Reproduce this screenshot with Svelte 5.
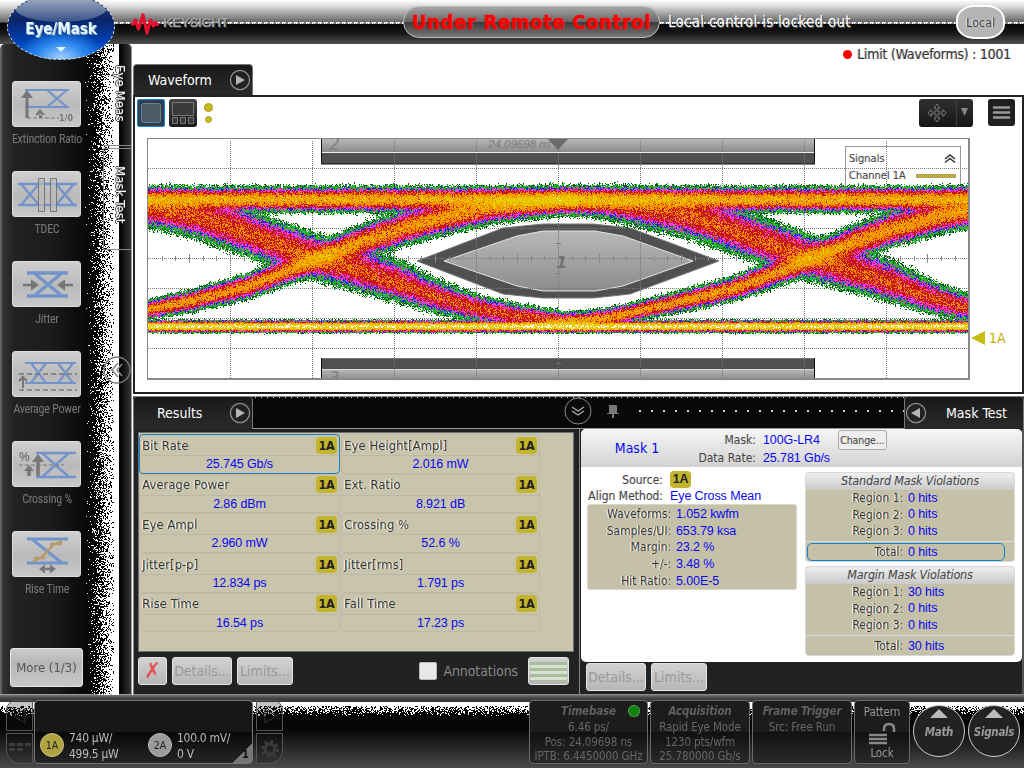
<script>
  const tools = ['Extinction Ratio', 'TDEC', 'Jitter', 'Average Power', 'Crossing %', 'Rise Time'];
  const results = [
    ['Bit Rate', '25.745 Gb/s'], ['Eye Height[Ampl]', '2.016 mW'],
    ['Average Power', '2.86 dBm'], ['Ext. Ratio', '8.921 dB'],
    ['Eye Ampl', '2.960 mW'], ['Crossing %', '52.6 %'],
    ['Jitter[p-p]', '12.834 ps'], ['Jitter[rms]', '1.791 ps'],
    ['Rise Time', '16.54 ps'], ['Fall Time', '17.23 ps']
  ];
  const stats = [
    ['Waveforms:', '1.052 kwfm'], ['Samples/UI:', '653.79 ksa'], ['Margin:', '23.2 %'],
    ['+/-:', '3.48 %'], ['Hit Ratio:', '5.00E-5']
  ];
  const violations = [
    { title: 'Standard Mask Violations', rows: ['0 hits', '0 hits', '0 hits'], total: '0 hits', selected: true },
    { title: 'Margin Mask Violations', rows: ['30 hits', '0 hits', '0 hits'], total: '30 hits', selected: false }
  ];
  const gridX = [1, 2, 3, 4, 5, 6, 7, 8, 9].map((i) => i * 82 + 0.5);
  const gridY = [29.5, 89.5, 149.5, 179.5, 209.5];
  const ticks = Array.from({ length: 59 }, (_, i) => ({ x: Math.round((i + 1) * 13.67) + 0.5, big: (i + 1) % 6 === 3 }));

  function random(seed) {
    return () => {
      seed = (seed + 0x6d2b79f5) | 0;
      let t = Math.imul(seed ^ (seed >>> 15), 1 | seed);
      t = (t + Math.imul(t ^ (t >>> 7), 61 | t)) ^ t;
      return ((t ^ (t >>> 14)) >>> 0) / 4294967296;
    };
  }

  // Dithers a canvas with white pixels; fn gives the chance of one at each point.
  function speckle(node, fn) {
    const ctx = node.getContext('2d');
    const img = ctx.createImageData(node.width, node.height);
    const rnd = random(7);
    for (let y = 0; y < node.height; y++)
      for (let x = 0; x < node.width; x++)
        if (rnd() < fn(x, y)) img.data.fill(255, (y * node.width + x) * 4, (y * node.width + x) * 4 + 4);
    ctx.putImageData(img, 0, 0);
  }
  const sideNoise = (x) => (x > 34 ? 0 : x > 29 ? 1 : x > 19 ? 0.5 + (x - 19) * 0.04 : Math.pow(x / 19, 2) * 0.5);
  const footNoise = (x, y) => (y < 4 ? 1 : Math.max(0, 0.7 - (y - 4) * 0.07));

  const interp = (pts, t) => {
    if (t <= pts[0][0]) return pts[0][1];
    for (let i = 1; i < pts.length; i++)
      if (t <= pts[i][0]) {
        const [a, b] = pts[i - 1], [c, d] = pts[i];
        return b + ((d - b) * (t - a)) / (c - a);
      }
    return pts[pts.length - 1][1];
  };
  const fall = [[-250, 201], [-200, 203], [-166, 208], [-120, 217], [-72, 233], [0, 259], [40, 270], [82, 283], [125, 298], [157, 307], [200, 315], [250, 321]];
  const rise = [[-250, 322], [-200, 317], [-166, 309], [-120, 299], [-72, 287], [0, 259], [40, 243], [88, 227], [130, 216], [180, 206], [250, 200]];
  const fallW = [[-250, 4.5], [-166, 7], [-100, 7.8], [40, 7.4], [120, 6], [170, 4.8], [250, 3.5]];
  const riseW = [[-250, 3.2], [-170, 3.3], [-72, 4.3], [0, 5.4], [60, 6.1], [130, 6], [250, 5]];
  const tail = [[-160, -4], [-120, -2.3], [50, -2.3], [90, -3], [140, -7]];

  function eye(node) {
    const W = node.width, H = node.height;
    const ctx = node.getContext('2d');
    const img = ctx.createImageData(W, H);
    const rnd = random(42);
    const levels = [
      [1.2, [255, 255, 245]], [0.05, [232, 204, 0]], [-0.9, [242, 142, 0]], [-1.85, [198, 20, 16]],
      [-2.6, [255, 60, 245]], [-3.1, [24, 24, 255]], [-4.7, [40, 180, 40]], [-5.4, [0, 88, 16]]
    ];
    for (let x = 0; x < W; x++) {
      const bands = [[199, 4.3, 0], [326, 1.9, 1.2]];
      for (const c of [-324, 168, 661, 1153]) {
        const t = x - c;
        if (Math.abs(t) > 262) continue;
        const fade = Math.abs(t) > 240 ? -(Math.abs(t) - 240) * 0.05 : 0;
        bands.push([interp(fall, t), interp(fallW, t), -0.95 + fade]);
        if (t > -160 && t < 140) bands.push([interp(fall, t) - 11, 6, interp(tail, t)]);
        bands.push([interp(rise, t), interp(riseW, t), -0.3 + fade]);
      }
      const jitter = bands.map((b) => (rnd() - 0.5) * (b[1] < 2 ? 0.8 : 2));
      for (let y = 40; y < 200; y++) {
        let d = 0;
        bands.forEach(([yc, s, w], i) => {
          const z = (y + 138 - yc - jitter[i]) / s;
          d += Math.exp(w - (z * z) / 2);
        });
        const n = rnd() + rnd() + rnd() - 1.5;
        const base = Math.log(d + 1e-9);
        const v = base + n * (base < -3 ? 1.5 : base < -2 ? 1.1 : base > 0.2 ? 0.6 : 0.85);
        const hit = levels.find((l) => v > l[0]);
        if (hit) img.data.set([...hit[1], 255], (y * W + x) * 4);
      }
    }
    ctx.putImageData(img, 0, 0);
  }
</script>

{#snippet play(left)}
  <svg class="play" width="22" height="22" viewBox="0 0 22 22">
    <circle cx="11" cy="11" r="9.6" fill="#222" stroke="#8c8c8c" stroke-width="1.3" />
    <path d={left ? 'M15 6v10L6 11z' : 'M7 6v10l9-5z'} fill="#b4b4b4" />
  </svg>
{/snippet}

<div class="app">
  <header>
    <div class="rule"></div>
    <svg class="logo" width="30" height="26" viewBox="0 0 30 26"><path d="M1 14h2.500l2-4 3 9 4.500-14 4 18 3.500-13 3 6 2-3.500 1.500 2h2" fill="none" stroke="#e4102c" stroke-width="3.200" stroke-linejoin="round" /></svg>
    <b class="brand">KEYSIGHT</b>
    <div class="remote">Under Remote Control</div>
    <span class="locked">Local control is locked out</span>
    <button class="local">Local</button>
    <div class="orb"><i></i><b>Eye/Mask</b><em></em></div>
  </header>

  <main>
    <aside>
      <canvas class="noise" width="36" height="651" use:speckle={sideNoise}></canvas>
      <nav>
        {#each tools as tool, i}
          <div class="tool">
            <button>
              <svg width="69" height="46" viewBox="0 0 69 46" fill="none">
                {#if i === 0}
                  <path d="M12 8h44M12 25h44M34 8l20 17M54 8L34 25" stroke="#7294cb" stroke-width="2.2" />
                  <path d="M14 36V13" stroke="#777" stroke-width="3" /><path d="M14 8l-6 8h12zM27 27l-5 6h10zM26 32h3v4h-3z" fill="#777" />
                  <path d="M14 36h32" stroke="#777" stroke-dasharray="4 2" /><text x="46" y="39" class="tiny">1/0</text>
                {:else if i === 1}
                  <path d="M5 12h59M5 33h59M8 12l18 21M8 33l18-21M43 12l18 21M43 33l18-21" stroke="#7294cb" stroke-width="2.4" />
                  <path d="M25.500 6.500h6v33h-6zM37.500 6.500h6v33h-6z" fill="#bbb" fill-opacity=".7" stroke="#777" />
                {:else if i === 2}
                  <path d="M14 11h41M14 34h41M21 11l28 23M21 34l28-23" stroke="#7294cb" stroke-width="3.4" />
                  <path d="M10 23h10M50 23h10" stroke="#777" stroke-width="2.4" /><path d="M26 23l-8-5.500v11zM44 23l8-5.500v11z" fill="#777" />
                {:else if i === 3}
                  <path d="M12 11h51M12 31h51M18 11l15 20M18 31l15-20M45 11l15 20M45 31l15-20" stroke="#7294cb" stroke-width="2.2" />
                  <path d="M6 22h58M6 38h58" stroke="#777" stroke-dasharray="5 3" stroke-width="1.4" /><path d="M10 36V26M6 29l4-4 4 4" stroke="#777" stroke-width="2" />
                {:else if i === 4}
                  <path d="M23 11h40M23 35h40M29 11l27 24M29 35l27-24" stroke="#7294cb" stroke-width="2.4" />
                  <path d="M6 23h45" stroke="#777" stroke-dasharray="4 2" /><path d="M25 34V18M16 34v-5" stroke="#777" stroke-width="3.5" /><path d="M25 12l-6 8h12zM16 23l-5 6h10z" fill="#777" />
                  <text x="6" y="19" class="pct">%</text>
                {:else}
                  <path d="M14 7h41M14 31h41M20 8l29 23" stroke="#7294cb" stroke-width="3" />
                  <path d="M20 29l8-3 12-13 9-4M21 26h11M37 12h12" stroke="#b79c6b" stroke-width="2.6" />
                  <path d="M30 37h9" stroke="#777" stroke-width="2.600" /><path d="M26 37l6-4.500v9zM43 37l-6-4.500v9z" fill="#777" />
                {/if}
              </svg>
            </button>
            <span>{tool}</span>
          </div>
        {/each}
        <button class="more">More (1/3)</button>
      </nav>
      <div class="vtabs"><span class="on">Eye Meas</span><span>Mask Test</span></div>
      <svg class="collapse" width="28" height="28" viewBox="0 0 28 28" fill="none"><circle cx="14" cy="14" r="13" stroke="#777" stroke-width="1.3" /><path d="M15 7l-6 7 6 7M19 8l-5 6 5 6" stroke="#888" stroke-width="1.6" /></svg>
    </aside>

    <section class="content">
      <div class="topstrip">
        <div class="tab">Waveform {@render play(false)}</div>
        <div class="limit"><i></i>Limit (Waveforms) : 1001</div>
      </div>

      <div class="wave">
        <div class="bar">
          <svg class="lay sel" width="28" height="28" viewBox="0 0 28 28"><rect x="4.500" y="4.500" width="19" height="19" rx="2" fill="#4b5a66" stroke="#71808c" /></svg>
          <svg class="lay" width="28" height="28" viewBox="0 0 28 28" fill="#3a3a3a" stroke="#777"><path d="M3.500 3.500h21v13h-21zM3.500 18.500h5v6h-5zM11.500 18.500h5v6h-5zM19.500 18.500h5v6h-5z" /></svg>
          <div class="dots"><i></i><i></i></div>
          <svg class="move" width="54" height="28" viewBox="0 0 54 28"><path d="M18 5l3 4h-2v4h5v-2.500l3 3.500-3 3.500V15h-5v4h2l-3 4-3-4h2v-4h-5v2.500L9 14l3-3.500V13h5V9h-2z" fill="none" stroke="#777" /><path d="M37.500 1v26" stroke="#3c3c3c" /><path d="M42 9h7l-3.500 8z" fill="#888" /></svg>
          <svg class="menu" width="27" height="27" viewBox="0 0 27 27"><path d="M6 8.500h15M6 13.500h15M6 18.500h15" stroke="#999" stroke-width="2.600" stroke-linecap="round" /></svg>
        </div>
        <div class="row">
          <div class="plot">
            <svg width="822" height="241" viewBox="0 0 822 241">
              <defs>
                <linearGradient id="g" x2="0" y2="1"><stop stop-color="#b8b8b8" /><stop offset="1" stop-color="#8c8c8c" /></linearGradient>
              </defs>
              <rect x="173.500" y="-2" width="493" height="27" fill="#505050" stroke="#111" />
              <rect x="174" y="0" width="492" height="13" fill="url(#g)" /><path d="M174 13.500h492" stroke="#eee" />
              <rect x="173.500" y="219.500" width="493" height="21" fill="#505050" stroke="#777" />
              <rect x="174" y="230" width="492" height="11" fill="url(#g)" /><path d="M174 230.500h492" stroke="#ddd" /><path d="M173.500 219v21M666.500 219v21" stroke="#111" />
              <text x="181" y="11" class="region">2</text><text x="181" y="245" class="region">3</text>
              <path d="M269 122L355 89 395 85h50l37 4 89 33-89 33-37 4h-50l-40-4z" fill="#505050" stroke="#777" />
              <path d="M296 122L369 97l26-5h52l28 5 70 25-70 25-28 5h-52l-26-5z" fill="url(#g)" stroke="#e4e4e4" />
              <text x="408" y="129" class="region one">1</text>
              <g stroke="#777" stroke-dasharray="1 1">
                {#each gridX as x}<path d="M{x} 2V240" />{/each}
                {#each gridY as y}<path d="M0 {y}H821" />{/each}
                <path d="M0 119.500H821" />
              </g>
              {#each ticks as t}<path d="M{t.x} {t.big ? 115 : 117}v{t.big ? 9 : 5}" stroke="#888" />{/each}
              <path d="M408 104.500h5M408 134.500h5M408 224.500h5" stroke="#777" />
              <text x="340" y="9" class="time">24.09698 ns</text>
              <path d="M400 0h20l-10 11z" fill="#6b6b6b" />
            </svg>
            <div class="legend">
              <div><span class="etch pale">Signals</span> <svg width="12" height="9" viewBox="0 0 12 9" fill="none" stroke="#333" stroke-width="1.500"><path d="M1 5l5-4 5 4M1 8.500l5-4 5 4" /></svg></div>
              <div><span class="etch pale">Channel 1A</span> <i></i></div>
            </div>
            <canvas width="821" height="240" use:eye></canvas>
          </div>
          <div class="marker"><i></i>1A</div>
        </div>
      </div>

      <div class="lowhead">
        <div class="tab res">Results {@render play(false)}</div>
        <div class="gap">
          <svg class="chev" width="28" height="28" viewBox="0 0 28 28" fill="none"><circle cx="14" cy="14" r="13" stroke="#8b8b8b" fill="#0b0b0b" /><path d="M8 10l6 4 6-4M8 14l6 4 6-4" stroke="#aaa" stroke-width="1.300" /></svg>
          <svg width="12" height="14" viewBox="0 0 12 14"><path d="M2 1h8v8h2v1H7v4H5v-4H0V9h2z" fill="#777" /></svg>
          <div class="pins"></div>
        </div>
        <div class="tab masktab">{@render play(true)} Mask Test</div>
      </div>

      <div class="panels">
        <section class="results">
          <div class="list">
            {#each results as [name, value], i}
              <div class="cell" class:chosen={i === 0}>
                <div class="title"><span class="etch">{name}</span><b class="badge">1A</b></div>
                <div class="value">{value}</div>
              </div>
            {/each}
          </div>
          <div class="actions">
            <button class="x">✗</button><button class="w60">Details...</button><button class="w55">Limits...</button>
            <label><i></i>Annotations</label>
            <button class="lines"><i></i></button>
          </div>
        </section>

        <section class="mask">
          <div class="card">
            <div class="cardhead">
              <h2>Mask 1</h2>
              <dl><dt><span class="etch pale">Mask:</span></dt><dd>100G-LR4 <button class="change"><span class="etch pale">Change...</span></button></dd><dt><span class="etch pale">Data Rate:</span></dt><dd>25.781 Gb/s</dd></dl>
            </div>
            <div class="cardbody">
              <div class="leftcol">
                <dl class="source"><dt><span class="etch pale">Source:</span></dt><dd><b class="badge">1A</b></dd><dt><span class="etch pale">Align Method:</span></dt><dd>Eye Cross Mean</dd></dl>
                <dl class="stats">{#each stats as [k, v]}<dt><span class="etch">{k}</span></dt><dd>{v}</dd>{/each}</dl>
              </div>
              <div class="rightcol">
                {#each violations as box}
                  <div class="viol">
                    <h3><span class="etch pale">{box.title}</span></h3>
                    <dl>{#each box.rows as hits, i}<dt><span class="etch">Region {i + 1}:</span></dt><dd>{hits}</dd>{/each}</dl>
                    <dl class="total" class:picked={box.selected}><dt><span class="etch">Total:</span></dt><dd>{box.total}</dd></dl>
                  </div>
                {/each}
              </div>
            </div>
          </div>
          <div class="actions"><button class="w60">Details...</button><button class="w55">Limits...</button></div>
        </section>
      </div>
    </section>
  </main>

  <footer>
    <canvas class="footnoise" width="1024" height="17" use:speckle={footNoise}></canvas>
    <div class="pair left">
      <div><svg width="14" height="16" viewBox="0 0 14 16"><path d="M12 1v14L1 8z" fill="none" stroke="#333" /></svg></div>
      <div><svg width="22" height="12" viewBox="0 0 22 12" fill="#3c3c3c"><path d="M0 0h6v3H0zM8 0h6v3H8zM16 0h6v3h-6zM0 5h6v3H0zM8 5h6v3H8z" /></svg></div>
    </div>
    <div class="channels">
      <i class="ball">1A</i><p class="c1">740 µW/<br />499.5 µW</p>
      <i class="ball grey">2A</i><p>100.0 mV/<br />0 V</p>
      <b class="corner"><span>1</span></b>
    </div>
    <div class="pair right">
      <div><svg width="14" height="16" viewBox="0 0 14 16"><path d="M2 1v14l11-7z" fill="none" stroke="#333" /></svg></div>
      <div><svg width="20" height="20" viewBox="0 0 20 20" fill="none" stroke="#3c3c3c"><circle cx="10" cy="10" r="5" stroke-width="3" /><circle cx="10" cy="10" r="7.500" stroke-width="3" stroke-dasharray="3 2.890" /></svg></div>
    </div>
    <div class="status time1"><h4>Timebase <i></i></h4><p>6.46 ps/</p><p>Pos: 24.09698 ns</p><p>IPTB: 6.4450000 GHz</p></div>
    <div class="status s99"><h4>Acquisition</h4><p>Rapid Eye Mode</p><p>1230 pts/wfm</p><p>25.780000 Gb/s</p></div>
    <div class="status s99"><h4>Frame Trigger</h4><p>Src: Free Run</p></div>
    <div class="status lock">
      <p>Pattern</p>
      <svg width="28" height="23" viewBox="0 0 28 23"><path d="M16 9V7q0-5 5-5t5 5v3" fill="none" stroke="#888" stroke-width="2.500" /><path d="M1 13h18M1 17h18M1 21h18" stroke="#888" stroke-width="2.600" /></svg>
      <p>Lock</p>
    </div>
    <div class="round"><i></i>Math</div>
    <div class="round"><i></i>Signals</div>
  </footer>
</div>

<style>
  :global(body) { margin: 0; background: #fff; overflow: hidden; }
  .app { width: 1024px; height: 768px; display: flex; flex-direction: column; overflow: hidden; font-family: 'DejaVu Sans Condensed', 'DejaVu Sans', sans-serif; font-size: 12px; font-stretch: condensed; background: #fff; position: relative; }
  .app * { box-sizing: border-box; }
  button { font: inherit; padding: 0; margin: 0; border: 1px solid #e4e4e4; border-radius: 3px; }
  h2, h3, h4, p, dl, dd { margin: 0; font-weight: normal; }
  svg { display: block; flex: none; }

  header { height: 44px; flex: none; display: flex; align-items: center; position: relative; z-index: 2; padding-left: 130px; background: linear-gradient(#fff 0, #e4e4e4 5px, #999 15px, #686868 22px, #060606 23px, #161616 33px, #3a3a3a 40px, #505050 44px); }
  .rule { position: absolute; left: 108px; right: 0; top: 22px; height: 2px; background: repeating-linear-gradient(90deg, #fff 0 4px, #777 4px 6px); border-bottom: 1px dotted #888; }
  .logo { margin-top: 1px; position: relative; }
  .brand { font: bold 13.500px 'Liberation Sans', sans-serif; letter-spacing: -.45px; color: #a0a0a0; margin-left: 3px; width: 70px; position: relative; text-shadow: 1px 1px #333; }
  .remote { position: relative; width: 257px; height: 32px; margin-left: 170px; border: 1px solid #bbb; border-radius: 16px; background: linear-gradient(#a6a6a6, #666 49%, #3b3b3b 50%, #777); color: #f00; font-weight: bold; font-size: 20px; line-height: 30px; text-align: center; white-space: nowrap; letter-spacing: .65px; -webkit-text-stroke: .5px #f00; }
  .locked { position: relative; width: 184px; margin-left: 8px; font-size: 15px; color: #fff; white-space: nowrap; letter-spacing: .28px; text-shadow: 1px 1px #555; }
  .local { position: relative; margin-left: 104px; width: 49px; height: 34px; border: 2px solid #fff; border-radius: 18px / 15px; background: #b5b5b5; color: #444; font-size: 12.500px; text-shadow: -1px 0 #eee; }
  .orb { position: absolute; left: 7px; top: -7px; width: 108px; height: 67px; border: 1px dashed #ddd; border-radius: 50%; overflow: hidden; background: radial-gradient(ellipse 45px 30px at 50% 100%, #a8d4ff, #2b86ef 55%, transparent), linear-gradient(#304a80, #0a2468 40%, #0043b8 75%, #0068e0); display: flex; align-items: center; justify-content: center; }
  .orb i { position: absolute; left: 7px; right: 7px; top: 0; height: 28px; border-radius: 50%; background: linear-gradient(#c4cede, #40598a); opacity: .85; }
  .orb b { position: relative; font-size: 15px; color: #e8f8fc; top: 2px; text-shadow: 1px 1px #8ac; }
  .orb em { position: absolute; bottom: 7px; border: 5px solid transparent; border-top-color: #d8f4ff; border-bottom: 0; }

  main { height: 651px; flex: none; display: flex; }
  aside { width: 132px; flex: none; position: relative; background: linear-gradient(90deg, #777 0, #333 3px, #222 14px, #1c1c1c 50px, #0c0c0c 80px, #000 104px); display: flex; border-radius: 5px 5px 0 0; border-bottom: 1px solid #999; }
  .noise { position: absolute; left: 84px; top: 0; z-index: 0; }
  nav { width: 94px; padding-top: 37px; display: flex; flex-direction: column; align-items: center; position: relative; }
  .tool { height: 90px; flex: none; text-align: center; width: 94px; }
  .tool button { width: 69px; height: 46px; display: block; margin: 0 auto 0 12px; border: 1px solid #ddd; background: linear-gradient(#cfcfcf, #b9b9b9 55%, #c8c8c8); }
  .tool span { display: block; margin-top: 5px; font: 12px 'Liberation Sans Narrow', 'Roboto', sans-serif; font-stretch: condensed; letter-spacing: -.25px; color: #777; white-space: nowrap; line-height: 15px; }
  .tiny { font: bold 8px 'DejaVu Sans', sans-serif; fill: #777; }
  .pct { font: bold 12px 'Liberation Sans', sans-serif; fill: #777; }
  .more { width: 73px; height: 39px; margin: 27px 0 0 -1px; font-size: 13px; color: #555; background: linear-gradient(#ccc, #b6b6b6 40%, #c8c8c8); }
  .vtabs { position: absolute; left: 119px; top: 0; bottom: 0; width: 13px; border-right: 1px solid #999; background: linear-gradient(90deg, #000, #333); border-radius: 0 5px 0 0; display: flex; flex-direction: column; }
  .vtabs span { writing-mode: vertical-rl; height: 102px; margin-left: -16px; width: 28px; border: solid #888; border-width: 1px 0 1px 1px; color: #fff; text-shadow: 1px 0 #333, -1px 0 #333, 0 1px #555; font-size: 13px; line-height: 22px; padding-top: 17px; letter-spacing: .1px; }
  .vtabs .on { padding-top: 21px; border-left: 0; border-top: 0; margin-bottom: 2px; }
  .collapse { position: absolute; left: 103px; top: 312px; }

  .content { flex: 1; min-width: 0; display: flex; flex-direction: column; padding-left: 1px; }
  .topstrip { height: 51px; flex: none; display: flex; justify-content: space-between; align-items: flex-end; }
  .tab { background: linear-gradient(#191919, #2a2a2a); border: 1px solid #777; border-bottom: 0; border-radius: 4px 4px 0 0; height: 31px; width: 120px; color: #fff; font-size: 14px; display: flex; align-items: center; justify-content: space-between; padding: 0 1px 0 14px; white-space: nowrap; }
  .limit { align-self: flex-start; padding: 2px 13px 0 0; font-size: 14px; letter-spacing: -.25px; color: #333; display: flex; align-items: center; gap: 5px; text-shadow: -1px 0 #ccc; }
  .limit i { width: 9px; height: 9px; border-radius: 50%; background: #f00; }

  .wave { height: 299px; flex: none; border: 2px solid #222; background: #fff; }
  .bar { height: 41px; display: flex; align-items: center; padding: 0 7px 10px 2px; }
  .lay { background: linear-gradient(#444, #1b1b1b); border-radius: 3px; margin-right: 4px; }
  .sel { background: #2b3f50; outline: 1px solid #1585d6; outline-offset: -1px; }
  .dots { display: flex; flex-direction: column; align-items: center; gap: 4px; margin-left: 3px; }
  .dots i { width: 9px; height: 9px; border-radius: 50%; background: #c9ba1e; border: 1px solid #a69b16; }
  .dots i + i { width: 7px; height: 7px; }
  .move { margin-left: auto; background: linear-gradient(#303030, #161616); border-radius: 3px; }
  .menu { background: #202020; border-radius: 3px; margin-left: 15px; }
  .row { display: flex; padding-left: 12px; }
  .plot { position: relative; width: 823px; height: 242px; border: 1px solid #888; border-width: 1px 2px 2px 1px; overflow: hidden; }
  .plot canvas { position: absolute; left: 0; top: -1px; }
  .region { font: italic 17px 'DejaVu Sans', sans-serif; fill: #808080; }
  .one { font-weight: bold; font-size: 16px; fill: #707070; }
  .time { font: italic 11.500px 'Liberation Sans', sans-serif; fill: #7c7c7c; }
  .legend { position: absolute; left: 697px; top: 7px; width: 116px; height: 60px; border: 1px solid #999; padding: 3px 4px 3px 3px; font-size: 11px; }
  .legend div { display: flex; justify-content: space-between; align-items: center; height: 17px; line-height: 17px; white-space: nowrap; }
  .legend i { width: 40px; height: 4px; background: #c6ae22; border: 1px solid #aaa178; }
  .marker { display: flex; align-items: center; align-self: flex-start; margin-top: 190px; padding-left: 1px; gap: 4px; color: #bdb100; font-size: 14px; height: 20px; }
  .marker i { border: 7px solid transparent; border-left: 0; border-right: 14px solid #c8bd12; }

  .lowhead { margin-top: 2px; height: 33px; flex: none; display: flex; background: #222; border-top: 1px solid #888; }
  .res { padding-left: 23px; height: 32px; border-top: 0; }
  .gap { flex: 1; height: 32px; background: repeating-linear-gradient(90deg, #ddd 0 1px, transparent 1px 6px) 2px 0 / 100% 1px no-repeat, #080808; border-bottom: 1px solid #999; display: flex; align-items: center; gap: 15px; padding-left: 311px; padding-bottom: 3px; }
  .pins { flex: 1; height: 20px; background: radial-gradient(circle at 6px 10px, #ddd .7px, transparent .8px) 0 0 / 12px 20px repeat-x; }
  .masktab { padding: 0 16px 0 0; height: 32px; border-top: 0; }

  .panels { height: 266px; flex: none; display: flex; }
  .results { width: 446px; background: #222; border-left: 1px solid #888; border-bottom: 1px solid #888; padding: 3px 0 0 4px; }
  .list { width: 436px; height: 220px; border: 1px solid #6a7078; background: #c9c5ad; display: grid; grid-template: repeat(5, 39.700px) / 202px 200px; padding-top: 1px; }
  .cell { border: 1px solid #c0baa5; border-radius: 4px; margin-right: 1px; }
  .chosen { border: 1px solid #147fca; }
  .title { display: flex; justify-content: space-between; align-items: center; height: 21px; padding: 0 2px; border-bottom: 1px solid #bdb7a4; }
  .title .etch { font-size: 13px; white-space: nowrap; letter-spacing: 0; }
  .etch { color: #34342e; text-shadow: -1px 0 #fff, -.5px -.5px #fff; }
  .pale { color: #444; text-shadow: -1px 0 #ddd; }
  .badge { width: 21px; height: 17px; border-radius: 4px; background: #c4b42d; color: #222; font-size: 12.500px; line-height: 17px; text-align: center; display: block; letter-spacing: -.2px; }
  .value { text-align: center; font: 12.500px/17px 'Liberation Sans', Arial, sans-serif; color: #0808f0; letter-spacing: -.1px; }
  .actions { display: flex; align-items: center; gap: 5px; padding-top: 5px; }
  .actions button { height: 28px; background: linear-gradient(#d2d2d2, #b6b6b6); color: #999; font-size: 14px; }
  .actions .x { width: 29px; color: #e65252; font-size: 22px; line-height: 24px; }
  .w60 { width: 60px; } .w55 { width: 56px; }
  label { display: flex; align-items: center; gap: 6px; margin-left: auto; color: #888; font-size: 14px; letter-spacing: -.1px; }
  label i { width: 18px; height: 18px; background: #e8e8e8; border: 1px solid #bbb; border-radius: 2px; }
  .lines { width: 41px; margin: 0 10px 0 5px; padding: 3px 1px; }
  .lines i { display: block; height: 19px; background: repeating-linear-gradient(#a9bd9c 0 3px, #d8e2d2 3px 6px); }

  .mask { flex: 1; min-width: 0; background: #222; border-left: 1px solid #888; border-right: 2px solid #555; border-bottom: 1px solid #888; padding-left: 1px; }
  .card { height: 233px; border-radius: 5px; background: #fff; overflow: hidden; }
  .cardhead { height: 38px; background: linear-gradient(#f6f6f6, #d2d2d2); display: flex; }
  h2 { width: 112px; text-align: center; line-height: 38px; font-size: 14px; color: #0808f0; }
  dl { display: grid; align-content: start; column-gap: 7px; }
  dt { text-align: right; white-space: nowrap; font-size: 12px; letter-spacing: 0; }
  dd { font: 12.500px/17px 'Liberation Sans', Arial, sans-serif; color: #0808f0; letter-spacing: -.1px; white-space: nowrap; display: flex; align-items: center; }
  .cardhead dl { grid-template: 18px 18px / 63px 140px; padding-top: 2px; align-items: center; }
  .change { width: 49px; height: 20px; margin-left: 18px; border: 1px solid #aaa; background: #eee; font: 10.500px 'DejaVu Sans Condensed', sans-serif; letter-spacing: -.1px; }
  .cardbody { display: flex; padding: 5px 7px 0 6px; justify-content: space-between; }
  .source { grid-template: 17px 16px / 76px auto; height: 33px; align-items: center; margin-top: -1px; }
  .stats { width: 210px; height: 86px; border-radius: 3px; background: #c5c1a9; grid-template: repeat(5, 16.700px) / 83px auto; column-gap: 5px; padding-top: 1px; border: 1px solid #d8d7cb; }
  .stats dt, .viol dt { line-height: 17px; }
  .rightcol { display: flex; flex-direction: column; gap: 4px; }
  .viol { width: 210px; height: 90px; background: #c5c1a9; border-radius: 4px; border: 1px solid #d7d7d7; overflow: hidden; }
  h3 { height: 17px; background: linear-gradient(#eee, #cacaca); text-align: center; font-size: 12.500px; font-style: italic; line-height: 16px; letter-spacing: -.2px; }
  .viol dl { grid-template-columns: 97px auto; grid-auto-rows: 16.500px; column-gap: 5px; height: 52px; border-bottom: 1px solid #ddd; }
  .viol .total { height: 18px; margin: 1px 9px 0 1px; border: 1px solid transparent; border-radius: 5px; grid-template-columns: 95px auto; padding: 0; }
  .viol .picked { border-color: #147fca; }
  .mask .actions { padding-left: 5px; padding-top: 1px; }

  footer { height: 73px; flex: none; position: relative; display: flex; align-items: flex-start; padding: 5px 3px 0 6px; background: linear-gradient(#777 0, #444 3px, #333 8px, #000 9px, #080808 35px, #222 50px, #4a4a4a 73px); font-size: 12px; }
  .footnoise { position: absolute; left: 0; top: 7px; }
  footer > div { position: relative; }
  .pair { width: 27px; display: flex; flex-direction: column; gap: 2px; }
  .pair div { height: 31px; border: 1px solid #555; background: #0c0c0c40; display: flex; align-items: center; justify-content: center; }
  .left div { border-radius: 10px 0 0 0; } .left div + div { border-radius: 0 0 0 14px; }
  .right div { border-radius: 0 10px 0 0; } .right div + div { border-radius: 0 0 14px 0; }
  .channels { width: 219px; height: 64px; margin: 0 3px 0 1px; border: 1px solid #777; border-radius: 4px; background: linear-gradient(#171717 50%, #080808 50%, #262626); display: flex; padding: 30px 0 0 5px; color: #bbb; overflow: hidden; }
  .channels p { line-height: 16px; padding-left: 5px; font-size: 12px; white-space: nowrap; letter-spacing: -.3px; margin-top: -1px; }
  .c1 { width: 84px; }
  .ball { width: 24px; height: 24px; margin-top: 2px; border-radius: 50%; background: #b0a441; border: 1px solid #c8c084; color: #222; font: 10.500px/22px 'DejaVu Sans Condensed', sans-serif; text-align: center; flex: none; }
  .grey { background: #9b9b9b; border-color: #bbb; }
  .corner { position: absolute; right: 0; bottom: 0; width: 20px; height: 19px; background: linear-gradient(135deg, transparent 50%, #777 51%); color: #111; text-align: right; padding: 4px 3px 0 0; font-size: 11px; }
  .status { height: 64px; border: 1px solid #6a6a6a; border-radius: 4px; background: linear-gradient(#1c1c1c 50%, #111 50%, #2a2a2a); color: #666; text-align: center; white-space: nowrap; margin-right: 2px; font-size: 11.500px; letter-spacing: -.1px; }
  .status p { line-height: 14.700px; }
  h4 { font-weight: bold; font-style: italic; line-height: 17px; margin-top: 2px; font-size: 11.500px; color: #606060; letter-spacing: -.15px; }
  .time1 { width: 119px; margin-left: 246px; }
  .time1 h4 i { position: absolute; right: 7px; top: 4px; width: 12px; height: 12px; border-radius: 50%; background: #128012; border: 1px dotted #8d8; }
  .s99 { width: 100px; }
  .lock { width: 56px; color: #999; display: flex; flex-direction: column; align-items: center; justify-content: space-between; padding: 4px 0 2px; }
  .round { width: 52px; height: 52px; flex: none; margin: 5px 0 0 1px; border: 1px solid #ccc; border-radius: 50%; background: #222; color: #999; font-weight: bold; font-style: italic; font-size: 11.500px; text-align: center; letter-spacing: -.3px; }
  .round + .round { margin-left: 3px; }
  .round i { display: block; width: 0; margin: 3px auto 7px; border: 9px solid transparent; border-bottom-color: #bbb; border-top: 0; }
</style>
